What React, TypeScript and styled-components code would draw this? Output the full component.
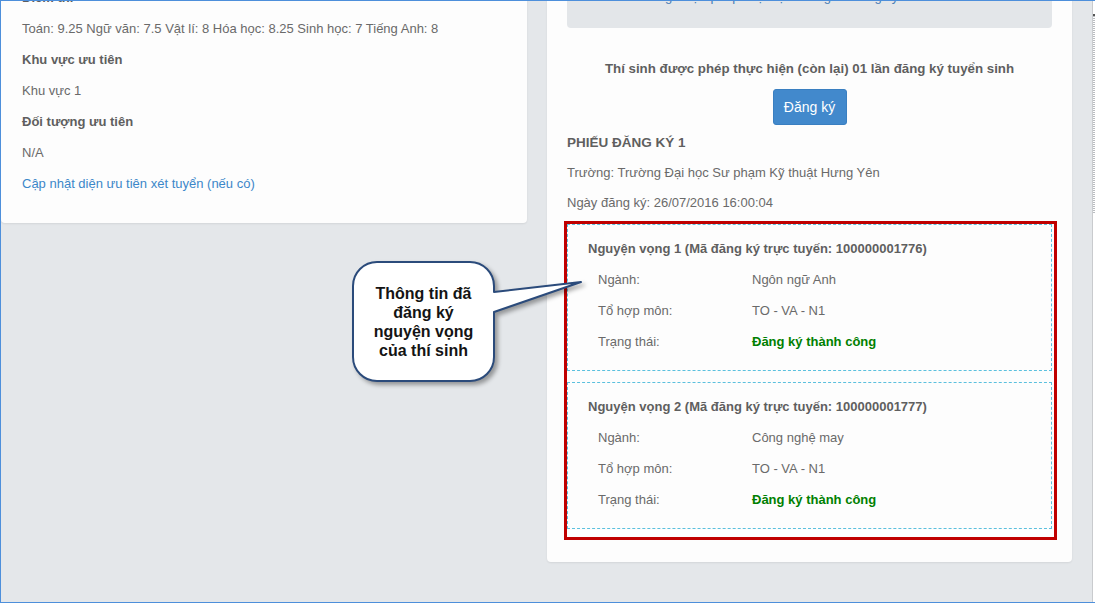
import styled, { createGlobalStyle } from "styled-components";

const GlobalStyle = createGlobalStyle`
  html, body {
    margin: 0;
    padding: 0;
    background: #ffffff;
  }
  * {
    box-sizing: border-box;
  }
`;

const Frame = styled.div`
  display: flex;
  width: 1095px;
  height: 603px;
  border-top: 1px solid #4d8fdb;
  border-left: 1px solid #4d8fdb;
  border-bottom: 1px solid #4d8fdb;
  background: #e4e7ea;
  font-family: "Liberation Sans", Arial, sans-serif;
  font-size: 13px;
  color: #666666;
  overflow: hidden;
`;

const Viewport = styled.div`
  position: relative;
  flex: 1;
  overflow: hidden;
`;

const ScrollTrack = styled.div`
  width: 3px;
  border-left: 1px solid #c9cbce;
  background: #ffffff;
  padding-top: 13px;
`;

const ScrollThumb = styled.div`
  height: 200px;
  border-top: 2px solid #555555;
  background: repeating-linear-gradient(
    to bottom,
    #b9bcc0 0,
    #b9bcc0 1px,
    #ffffff 1px,
    #ffffff 2px
  );
`;

const Columns = styled.div`
  display: flex;
  align-items: flex-start;
  gap: 20px;
  margin-top: -50px;
`;

const Card = styled.section<{ $width: number; $top: number; $bottom: number }>`
  width: ${(p) => p.$width}px;
  background: #fdfdfd;
  border-radius: 4px;
  box-shadow: 0 1px 2px rgba(0, 0, 0, 0.08);
  padding: ${(p) => p.$top}px 20px ${(p) => p.$bottom}px 20px;
`;

const LeftCard = styled(Card)`
  padding-left: 21px;
`;

const Line = styled.p<{ $bold?: boolean }>`
  margin: 0 0 11px;
  line-height: 20px;
  font-weight: ${(p) => (p.$bold ? 700 : 400)};
  color: ${(p) => (p.$bold ? "#5f5f5f" : "#6a6a6a")};
  white-space: nowrap;

  &:last-child {
    margin-bottom: 0;
  }
`;

const Link = styled.a`
  color: #3c87c9;
  text-decoration: none;
  cursor: pointer;
`;

const Alert = styled.div`
  background: #e3e6e9;
  border-radius: 4px;
  padding: 15px 20px 21px 20px;
  line-height: 20px;
  color: #4a7db5;
`;

const Notice = styled.h4`
  margin: 31px 0 10px;
  text-align: center;
  font-size: 13.3px;
  font-weight: 700;
  line-height: 20px;
  color: #5f5f5f;
`;

const ButtonRow = styled.div`
  display: flex;
  justify-content: center;
  margin-bottom: 8px;
`;

const PrimaryButton = styled.button`
  width: 74px;
  height: 36px;
  padding: 0;
  border: 1px solid #3a7fc1;
  border-radius: 3px;
  background: #4289cc;
  color: #ffffff;
  font-family: "Liberation Sans", Arial, sans-serif;
  font-size: 14px;
  cursor: pointer;
`;

const FormTitle = styled.h3`
  margin: 0 0 10px;
  font-size: 13.5px;
  font-weight: 700;
  line-height: 20px;
  color: #5f5f5f;
`;

const Meta = styled.p`
  margin: 0 0 10px;
  line-height: 20px;
  color: #6a6a6a;

  &:last-of-type {
    margin-bottom: 0;
  }
`;

const Highlight = styled.div`
  margin: 8px -5px 0 -3px;
  padding: 0 2px 8px 0;
  border: 3px solid #c00000;
`;

const WishList = styled.div`
  display: flex;
  flex-direction: column;
  gap: 11px;
`;

const WishBox = styled.div`
  border: 1px dashed #5bc0de;
  padding: 14px 20px 18px 20px;
`;

const WishTitle = styled.div`
  font-weight: 700;
  line-height: 20px;
  color: #5f5f5f;
  margin-bottom: 11px;
`;

const WishRow = styled.div`
  display: grid;
  grid-template-columns: 154px 1fr;
  padding-left: 10px;
  line-height: 20px;
  color: #6a6a6a;

  & + & {
    margin-top: 11px;
  }
`;

const Status = styled.span`
  color: #008000;
  font-weight: 700;
`;

const Callout = styled.div`
  position: absolute;
  left: 347px;
  top: 256px;
  width: 240px;
  height: 130px;
`;

const CalloutShape = styled.svg`
  position: absolute;
  inset: 0;
  overflow: visible;
  filter: drop-shadow(3px 3px 2px rgba(0, 0, 0, 0.35));
`;

const CalloutText = styled.div`
  position: absolute;
  left: 5px;
  top: 5px;
  width: 141px;
  height: 119px;
  display: flex;
  align-items: center;
  justify-content: center;
  text-align: center;
  font-size: 16px;
  font-weight: 700;
  line-height: 19px;
  color: #141414;
`;

interface Wish {
  order: number;
  code: string;
  major: string;
  combo: string;
}

const wishes: Wish[] = [
  { order: 1, code: "100000001776", major: "Ngôn ngữ Anh", combo: "TO - VA - N1" },
  { order: 2, code: "100000001777", major: "Công nghệ may", combo: "TO - VA - N1" },
];

function WishCard({ wish }: { wish: Wish }) {
  return (
    <WishBox>
      <WishTitle>
        Nguyện vọng {wish.order} (Mã đăng ký trực tuyến: {wish.code})
      </WishTitle>
      <WishRow>
        <span>Ngành:</span>
        <span>{wish.major}</span>
      </WishRow>
      <WishRow>
        <span>Tổ hợp môn:</span>
        <span>{wish.combo}</span>
      </WishRow>
      <WishRow>
        <span>Trạng thái:</span>
        <Status>Đăng ký thành công</Status>
      </WishRow>
    </WishBox>
  );
}

export default function App() {
  return (
    <>
      <GlobalStyle />
      <Frame>
        <Viewport>
          <Columns>
            <LeftCard $width={526} $top={37} $bottom={29}>
              <Line $bold>Điểm thi</Line>
              <Line>
                Toán: 9.25 Ngữ văn: 7.5 Vật lí: 8 Hóa học: 8.25 Sinh học: 7 Tiếng Anh: 8
              </Line>
              <Line $bold>Khu vực ưu tiên</Line>
              <Line>Khu vực 1</Line>
              <Line $bold>Đối tượng ưu tiên</Line>
              <Line>N/A</Line>
              <Line>
                <Link>Cập nhật diện ưu tiên xét tuyển (nếu có)</Link>
              </Line>
            </LeftCard>

            <Card $width={525} $top={21} $bottom={22}>
              <Alert>Thí sinh không được phép chọn lại trường đã đăng ký.</Alert>
              <Notice>
                Thí sinh được phép thực hiện (còn lại) 01 lần đăng ký tuyển sinh
              </Notice>
              <ButtonRow>
                <PrimaryButton>Đăng ký</PrimaryButton>
              </ButtonRow>
              <FormTitle>PHIẾU ĐĂNG KÝ 1</FormTitle>
              <Meta>Trường: Trường Đại học Sư phạm Kỹ thuật Hưng Yên</Meta>
              <Meta>Ngày đăng ký: 26/07/2016 16:00:04</Meta>
              <Highlight>
                <WishList>
                  {wishes.map((w) => (
                    <WishCard key={w.order} wish={w} />
                  ))}
                </WishList>
              </Highlight>
            </Card>
          </Columns>

          <Callout>
            <CalloutShape width="240" height="130" viewBox="0 0 240 130">
              <path
                d="M 29 5 H 122 A 24 24 0 0 1 146 29 V 35 L 233 25 L 146 55 V 100 A 24 24 0 0 1 122 124 H 29 A 24 24 0 0 1 5 100 V 29 A 24 24 0 0 1 29 5 Z"
                fill="#ffffff"
                stroke="#2b4b7b"
                strokeWidth="2"
                strokeLinejoin="round"
              />
            </CalloutShape>
            <CalloutText>
              Thông tin đã
              <br />
              đăng ký
              <br />
              nguyện vọng
              <br />
              của thí sinh
            </CalloutText>
          </Callout>
        </Viewport>
        <ScrollTrack>
          <ScrollThumb />
        </ScrollTrack>
      </Frame>
    </>
  );
}
